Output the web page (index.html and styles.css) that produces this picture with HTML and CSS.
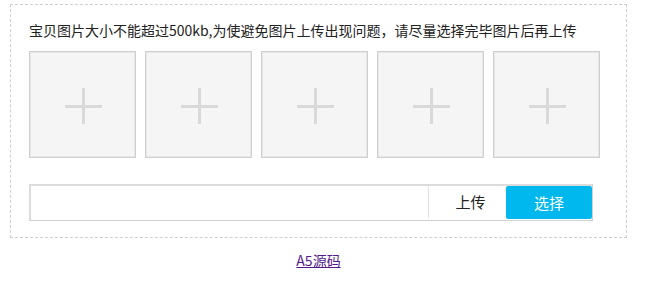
FILE: index.html
```html
<!DOCTYPE html>
<html>
<head>
    <title>图片上传</title>
    <meta charset="UTF-8" />
    <link rel="stylesheet" href="styles.css">
</head>
<body>
    <div id="uploader">
        <div class="tip">宝贝图片大小不能超过500kb,为使避免图片上传出现问题，请尽量选择完毕图片后再上传</div>
        <div class="imageList">
            <div class="imageItem"><span class="plus"></span></div>
            <div class="imageItem"><span class="plus"></span></div>
            <div class="imageItem"><span class="plus"></span></div>
            <div class="imageItem"><span class="plus"></span></div>
            <div class="imageItem"><span class="plus"></span></div>
        </div>
        <div class="fileBar">
            <input class="fileName" type="text" />
            <div class="uploadBtn">上传</div>
            <div class="selectBtn">选择</div>
        </div>
    </div>
    <div class="footer"><a href="#">A5源码</a></div>
</body>
</html>
```

FILE: styles.css
```css
body
{
    margin: 0;
    font-family: "Noto Sans CJK SC", "Liberation Sans", sans-serif;
    font-size: 14px;
    color: #333;
    background-color: #fff;
}

#uploader
{
    box-sizing: border-box;
    width: 617px;
    margin: 4px 0 0 10px;
    padding: 15px 18px 16px 18px;
    border: 1px dashed #cfcfcf;
}

#uploader > .tip
{
    height: 20px;
    line-height: 20px;
    font-size: 14px;
    color: #222;
    white-space: nowrap;
}

#uploader > .imageList
{
    display: flex;
    gap: 9px;
    margin-top: 11px;
}

#uploader .imageItem
{
    position: relative;
    box-sizing: border-box;
    width: 107px;
    height: 107px;
    border: 1px solid #cfcfcf;
    box-shadow: inset 0 0 0 1px #e8e8e8;
    background-color: #f5f5f5;
    cursor: pointer;
}

#uploader .imageItem > .plus
{
    position: absolute;
    left: 35px;
    top: 36px;
    width: 37px;
    height: 36px;
}

#uploader .imageItem > .plus::before,
#uploader .imageItem > .plus::after
{
    content: "";
    position: absolute;
    background-color: #d9d9d9;
}

#uploader .imageItem > .plus::before
{
    left: 0;
    top: 17px;
    width: 37px;
    height: 3px;
}

#uploader .imageItem > .plus::after
{
    left: 17px;
    top: 0;
    width: 3px;
    height: 36px;
}

#uploader > .fileBar
{
    display: flex;
    box-sizing: border-box;
    width: 564px;
    height: 37px;
    margin-top: 26px;
    border: 1px solid #d0d0d0;
    border-top: 2px solid #dcdcdc;
    border-left: 2px solid #dcdcdc;
}

#uploader .fileName
{
    flex: 1;
    min-width: 0;
    margin: 0;
    padding: 0 8px;
    border: none;
    outline: none;
    font-family: inherit;
    font-size: 14px;
}

#uploader .uploadBtn
{
    box-sizing: border-box;
    width: 78px;
    margin-bottom: 2px;
    padding-left: 6px;
    border-left: 1px solid #e0e0e0;
    line-height: 32px;
    text-align: center;
    font-size: 15px;
    color: #222;
    cursor: pointer;
}

#uploader .selectBtn
{
    width: 86px;
    margin-bottom: 1px;
    border-radius: 2px;
    background-color: #00b7ee;
    line-height: 33px;
    text-align: center;
    font-size: 15px;
    color: #fff;
    cursor: pointer;
}

.footer
{
    width: 617px;
    margin: 13px 0 0 10px;
    line-height: 18px;
    text-align: center;
    font-size: 14px;
}

.footer > a
{
    color: #551a8b;
}
```
